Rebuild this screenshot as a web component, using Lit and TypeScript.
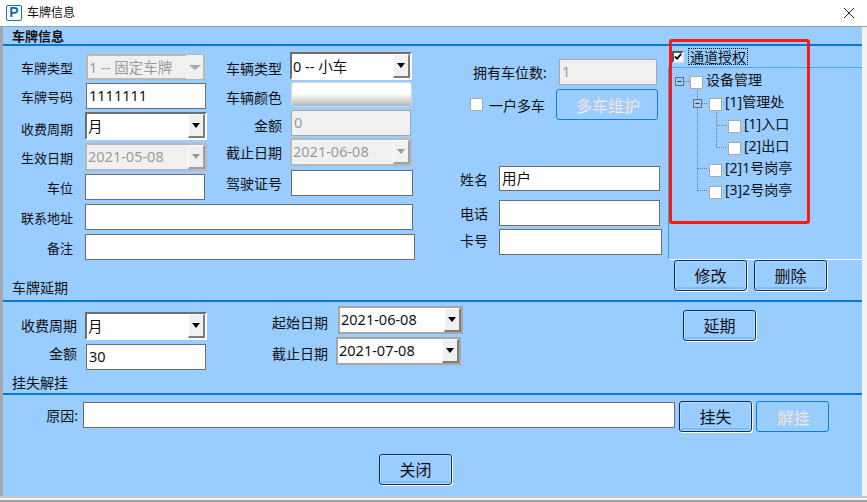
import { LitElement, html, css } from "lit";
import { customElement } from "lit/decorators.js";

const treeRows = [
  { depth: "d0", text: "设备管理" },
  { depth: "d1", text: "[1]管理处" },
  { depth: "d2", text: "[1]入口" },
  { depth: "d2", text: "[2]出口" },
  { depth: "d1", text: "[2]1号岗亭" },
  { depth: "d1", text: "[3]2号岗亭" },
];

@customElement("app-root")
export class AppRoot extends LitElement {
  static styles = css`
    :host { display: block; width: 867px; height: 502px; overflow: hidden; background: #fff;
      font: 14px "Noto Sans", "Noto Sans CJK SC", sans-serif; color: #111; }
    * { box-sizing: border-box; }
    .titlebar { height: 27px; display: flex; align-items: center; background: #fff; border-bottom: 1px solid #a0a0a0; padding: 0 13px 1px 6px; }
    .logo { width: 16px; height: 16px; border: 1.5px solid #1c6fb8; border-radius: 2px; color: #0f6cbd; font: 900 14px/13px "Liberation Sans", sans-serif; text-align: center; margin-right: 5px; }
    .title { flex: 1; font-size: 12px; line-height: 14px; }
    .x { width: 10px; height: 10px; display: block; }
    .win { height: 469px; background: #99ccff; border-left: 3px solid #8a9099; border-right: 5px solid; border-image: linear-gradient(90deg, #a4a8ae 0 60%, #f2f2f2 60%) 1; border-top: 0; border-bottom: 0; display: flex; flex-direction: column; }
    .foot { height: 6px; background: linear-gradient(#c8c8c8 0 2px, #f4f4f4 2px 4px, #a0a0a0 4px); }
    .sec-title { padding-left: 9px; line-height: 17px; height: 17px; }
    .bold { font-weight: 700; font-size: 13px; padding-top: 1px; }
    .rule { height: 2px; background: #0078d7; flex: none; }
    .top { height: 254px; display: flex; flex: none; position: relative; }
    .left { width: 457px; display: flex; flex-direction: column; }
    .cols { display: flex; }
    .colA { width: 216px; padding-top: 8px; display: flex; flex-direction: column; gap: 3px; }
    .colB { width: 200px; padding-top: 6px; display: flex; flex-direction: column; }
    .row { display: flex; align-items: center; }
    .la { width: 70px; text-align: right; margin-right: 12px; flex: none; white-space: nowrap; font-size: 13px; }
    .la.big { width: 74px; margin-right: 8px; font-size: 14px; }
    .lb { width: 63px; text-align: right; margin-right: 8px; flex: none; white-space: nowrap; }
    .lc { width: 28px; margin-right: 11px; flex: none; }
    .down { position: relative; top: 2px; }
    .up { position: relative; top: -2px; }
    .up1 { position: relative; top: -1px; }
    .up4 { position: relative; top: -4px; }
    input { display: block; font: inherit; font-size: 14.5px; color: #111; height: 26px; width: 120px; background: #fff; border: 1px solid #6e6e6e; padding: 0 2px 2px; margin: 0; outline: none; border-radius: 0; flex: none; }
    input:disabled { background: #f0f0f0; color: #9a9a9a; border-color: #a8a8a8; }
    .combo { height: 28px; width: 122px; background: #fff; border: 2px solid; border-color: #6e6e6e #fdfdfd #fdfdfd #6e6e6e; display: flex; align-items: center; justify-content: space-between; font-size: 14.5px; padding-left: 1px; white-space: nowrap; flex: none; }
    .val { padding-bottom: 2px; }
    .combo.flat { border-color: #a6a6a6; }
    .combo.dis { background: #f0f0f0; color: #9a9a9a; border-color: #b8b8b8; }
    .combo.w119 { width: 119px; height: 26px; }
    .arrow { width: 17px; height: 24px; flex: none; background: #f0f0f0; border: 1px solid #fff; border-right: 2px solid #7d7d7d; border-bottom: 2px solid #7d7d7d; display: flex; align-items: center; justify-content: center; }
    .arrow::before { content: ""; border: 4px solid transparent; border-top: 5px solid #000; border-bottom: 0; }
    .dis .arrow { border-color: #fff #a0a0a0 #a0a0a0 #fff; }
    .dis .arrow::before { border-top-color: #9a9a9a; }
    .dis .arrow.plain { border: 0; }
    .dis .arrow.plain::before { border-width: 5px 6px 0; border-top-color: #a8a8a8; }
    .ml1 { margin-left: 1px; }
    .colorbar { width: 121px; height: 25px; margin-left: 1px; border-radius: 3px; border: 1px solid #cfd6dd; background: linear-gradient(#fff 0 45%, #b6b6b6); flex: none; }
    .mt2 { margin-top: 2px; }
    .mt3 { margin-top: 3px; }
    .mt4 { margin-top: 4px; }
    .wide { display: flex; flex-direction: column; gap: 4px; margin-top: 4px; }
    .w122 { width: 122px; }
    .w328 { width: 328px; }
    .w330 { width: 330px; }
    .left > .sec-title { margin-top: auto; margin-bottom: 4px; }
    .colC { width: 208px; display: flex; flex-direction: column; }
    .count { margin: 13px 0 0 13px; height: 26px; }
    .count span { width: 86px; margin-right: 0; flex: none; white-space: nowrap; }
    .w98 { width: 98px; }
    .multi { margin: 4px 0 0 10px; }
    .box { width: 13px; height: 13px; background: #fff; border: 1.5px solid #a9a9a9; flex: none; }
    .multi span { margin: 0 11px 0 6px; white-space: nowrap; }
    button { font: inherit; font-size: 16px; color: #111; width: 73px; height: 31px; background: #99ccff; border: 1.5px solid #0b2d5a; border-radius: 3px; box-shadow: 1px 1px 0 #fff, inset 0 0 0 1px #b5dbff, inset 0 -3px 0 #7fbbf5; padding: 0 0 2px; flex: none; }
    button:disabled { border: 1px solid #0e7be0; box-shadow: none; color: #c4ced8; text-shadow: 1px 1px 0 #eef4fa; }
    .w102 { width: 102px; }
    .people { margin-top: 46px; display: flex; flex-direction: column; }
    .w161 { width: 161px; height: 25px; }
    .h26 { width: 161px; height: 26px; }
    .w163 { width: 163px; height: 26px; }
    .mt9 { margin-top: 9px; }
    .right { width: 194px; display: flex; flex-direction: column; }
    .auth { height: 21px; display: flex; align-items: center; padding: 0 0 0 4px; }
    .auth .chk { width: 12px; height: 12px; background: #fff; border: 2px solid; border-color: #555 #e8e8e8 #e8e8e8 #555; display: flex; align-items: center; justify-content: center; }
    .chk svg { width: 9px; height: 9px; display: block; }
    .focus { margin-left: 4px; padding: 0 1px; border: 1px dotted #111; line-height: 15px; height: 17px; }
    .panel { height: 193px; border-top: 1px solid #4da3f5; border-left: 1px solid #3f9cf5; border-bottom: 1px solid #fff; padding-top: 8px; position: relative; }
    .tree-row { height: 22px; display: flex; align-items: flex-start; white-space: nowrap; }
    .tree-row span { margin: -4px 0 0 3px; line-height: 15px; }
    .d0 { padding-left: 21px; }
    .d1 { padding-left: 40px; }
    .d2 { padding-left: 59px; }
    .lines { position: absolute; left: 0; top: 0; width: 193px; height: 191px; pointer-events: none; }
    .btns { display: flex; gap: 7px; margin: 0 0 0 6px; }
    .sec2 { height: 91px; display: flex; flex: none; }
    .s2a { width: 269px; display: flex; flex-direction: column; padding-top: 10px; gap: 4px; }
    .s2a .sec-title { margin-top: auto; margin-bottom: 3px; }
    .s2b { width: 411px; padding-top: 4px; display: flex; flex-direction: column; gap: 3px; }
    .s2c { padding-top: 8px; }
    .l56 { width: 56px; margin-right: 10px; flex: none; white-space: nowrap; }
    .l56b { margin-right: 8px; }
    .w125 { width: 125px; }
    .s3 { display: flex; align-items: flex-start; padding-top: 6px; }
    .s3 .lbl { width: 75px; text-align: right; margin-right: 5px; line-height: 30px; }
    .s3 input { width: 592px; margin: 1px 4px 0 0; }
    .s3 button + button { margin-left: 4px; }
    .close { display: flex; padding: 22px 0 0 376px; }
    .red { position: absolute; left: 666px; top: -7px; width: 141px; height: 185px; border: 3.5px solid #fb1a12; border-radius: 3px; pointer-events: none; }
  `;

  private combo(value: string, cls = "", plain = false) {
    return html`<div class="combo ${cls}"><span class="val">${value}</span><div class="arrow ${plain ? "plain" : ""}"></div></div>`;
  }

  render() {
    return html`
      <div class="titlebar">
        <div class="logo">P</div>
        <div class="title">车牌信息</div>
        <svg class="x" viewBox="0 0 10 10"><path d="M0 0L10 10M10 0L0 10" stroke="#222" stroke-width="1" fill="none"/></svg>
      </div>
      <div class="win">
        <div class="sec-title bold">车牌信息</div>
        <div class="rule"></div>
        <div class="top">
          <div class="left">
            <div class="cols">
              <div class="colA">
                <div class="row"><span class="la">车牌类型</span><div class="ml1">${this.combo("1 -- 固定车牌", "dis w119", true)}</div></div>
                <div class="row"><span class="la">车牌号码</span><input class="ml1" value="1111111"></div>
                <div class="row"><span class="la down">收费周期</span>${this.combo("月")}</div>
                <div class="row"><span class="la">生效日期</span>${this.combo("2021-05-08", "dis")}</div>
                <div class="row"><span class="la">车位</span><input></div>
              </div>
              <div class="colB">
                <div class="row"><span class="lb down">车辆类型</span>${this.combo("0 -- 小车")}</div>
                <div class="row mt2"><span class="lb down">车辆颜色</span><div class="colorbar"></div></div>
                <div class="row mt3"><span class="lb down">金额</span><input class="ml1" disabled value="0"></div>
                <div class="row mt2"><span class="lb">截止日期</span>${this.combo("2021-06-08", "dis")}</div>
                <div class="row mt4"><span class="lb">驾驶证号</span><input class="ml1 w122"></div>
              </div>
            </div>
            <div class="wide">
              <div class="row"><span class="la">联系地址</span><input class="w328"></div>
              <div class="row"><span class="la">备注</span><input class="w330"></div>
            </div>
            <div class="sec-title">车牌延期</div>
          </div>
          <div class="colC">
            <div class="row count"><span>拥有车位数:</span><input class="w98" disabled value="1"></div>
            <div class="row multi"><div class="box"></div><span>一户多车</span><button class="w102" disabled>多车维护</button></div>
            <div class="people">
              <div class="row"><span class="lc">姓名</span><input class="w161" value="用户"></div>
              <div class="row mt9"><span class="lc">电话</span><input class="h26"></div>
              <div class="row mt3"><span class="lc up">卡号</span><input class="w163"></div>
            </div>
          </div>
          <div class="right">
            <div class="auth">
              <div class="chk"><svg viewBox="0 0 9 9"><path d="M1 4.5L3.5 7L8 1.5" stroke="#000" stroke-width="2" fill="none"/></svg></div>
              <div class="focus">通道授权</div>
            </div>
            <div class="panel">
              <svg class="lines" viewBox="0 0 193 191">
                <rect x="6.5" y="9.5" width="8" height="8" fill="none" stroke="#6f6f6f"/>
                <path d="M8.5 13.5h4" stroke="#333"/>
                <rect x="24.5" y="31.5" width="8" height="8" fill="none" stroke="#6f6f6f"/>
                <path d="M26.5 35.5h4" stroke="#333"/>
                <path d="M15 13.5h5M28.5 22v9M33 35.5h6M28.5 40v83M29 100.5h10M29 122.5h10M47.5 44v35M48 57.5h10M48 79.5h10" stroke="#777" stroke-dasharray="1 1" fill="none"/>
              </svg>
              ${treeRows.map((r) => html`<div class="tree-row ${r.depth}"><div class="box"></div><span>${r.text}</span></div>`)}
            </div>
            <div class="btns"><button>修改</button><button>删除</button></div>
          </div>
          <div class="red"></div>
        </div>
        <div class="rule"></div>
        <div class="sec2">
          <div class="s2a">
            <div class="row"><span class="la big up1">收费周期</span>${this.combo("月")}</div>
            <div class="row"><span class="la big up4">金额</span><input class="ml1" value="30"></div>
            <div class="sec-title">挂失解挂</div>
          </div>
          <div class="s2b">
            <div class="row"><span class="l56 down">起始日期</span>${this.combo("2021-06-08", "flat w125")}</div>
            <div class="row"><span class="l56 l56b down">截止日期</span>${this.combo("2021-07-08", "flat w125")}</div>
          </div>
          <div class="s2c"><button>延期</button></div>
        </div>
        <div class="rule"></div>
        <div class="s3">
          <div class="lbl">原因:</div>
          <input>
          <button>挂失</button>
          <button disabled>解挂</button>
        </div>
        <div class="close"><button>关闭</button></div>
      </div>
      <div class="foot"></div>
    `;
  }
}
